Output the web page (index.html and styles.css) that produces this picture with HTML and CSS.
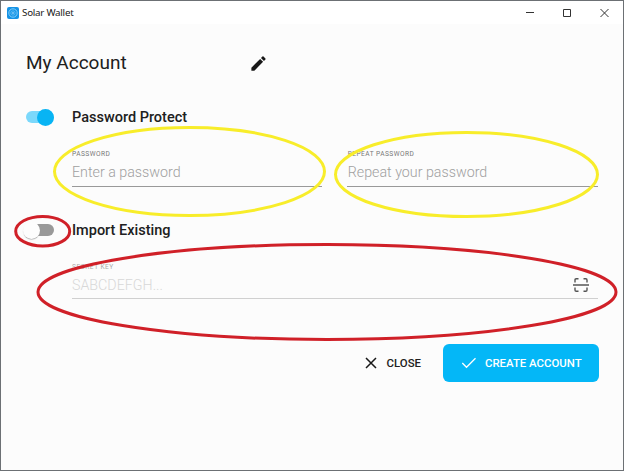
FILE: index.html
```html
<!DOCTYPE html>
<html lang="en">
<head>
<meta charset="utf-8">
<title>Solar Wallet</title>
<link rel="stylesheet" href="styles.css">
</head>
<body>
<div class="window">
  <header class="titlebar">
    <svg class="app-icon" viewBox="0 0 12 12"><rect width="12" height="12" rx="2" fill="#1593e6"/><circle cx="6" cy="6" r="4.2" fill="none" stroke="#8ad4fa" stroke-width=".9"/><circle cx="6" cy="6" r="2.2" fill="none" stroke="#62c0f5" stroke-width=".8"/><circle cx="6" cy="6" r=".8" fill="#d8f2ff"/></svg>
    <span class="app-name">Solar Wallet</span>
    <svg class="controls" viewBox="0 0 84 12" fill="none" stroke="#333"><path d="M2 5.500h8M39.500 2.500h7v7h-7zM76.500 2l8 8M84.500 2l-8 8" /></svg>
  </header>
  <main class="content">
    <div class="account">
      <h1 class="account-name">My Account</h1>
      <svg class="pencil" viewBox="0 0 24 24"><path d="M3 17.250V21h3.750L17.810 9.940l-3.750-3.750L3 17.250zM20.710 7.040a1 1 0 0 0 0-1.410l-2.340-2.340a1 1 0 0 0-1.410 0l-1.830 1.830 3.750 3.750 1.830-1.830z"/></svg>
    </div>
    <section class="option">
      <span class="switch on"><span class="thumb"></span></span>
      <h2 class="option-title">Password Protect</h2>
    </section>
    <div class="fields">
      <div class="field">
        <span class="label">PASSWORD</span>
        <span class="value">Enter a password</span>
      </div>
      <div class="field">
        <span class="label">REPEAT PASSWORD</span>
        <span class="value">Repeat your password</span>
      </div>
    </div>
    <section class="option import">
      <span class="switch"><span class="thumb"></span></span>
      <h2 class="option-title">Import Existing</h2>
    </section>
    <div class="fields">
      <div class="field disabled">
        <span class="label">SECRET KEY</span>
        <span class="value">SABCDEFGH...<svg class="scan" viewBox="0 0 16 14" fill="none" stroke="#555" stroke-width="1.400"><path d="M2 4.500V1.900q0-1.200 1.200-1.200H5.500M10.500.7h2.300q1.200 0 1.200 1.200v2.600M2 9.500v2.600q0 1.200 1.200 1.200h2.300M10.500 13.300h2.300q1.200 0 1.200-1.200V9.500M0 7h16"/></svg></span>
      </div>
    </div>
    <div class="actions">
      <button class="close"><svg class="x-icon" viewBox="0 0 12 12" fill="none" stroke="#181818" stroke-width="1.500"><path d="M1 1l10 10M11 1L1 11"/></svg><span>CLOSE</span></button>
      <button class="create"><svg class="check" viewBox="0 0 16 12" fill="none" stroke="#fff" stroke-width="1.300"><path d="M1.300 6l4.200 4.300L14.500 1.300"/></svg><span>CREATE ACCOUNT</span></button>
    </div>
  </main>
  <svg class="marks" viewBox="0 0 624 471" fill="none">
    <g stroke="#f8ed2a" stroke-width="3">
      <ellipse cx="189.500" cy="171.500" rx="135" ry="44"/>
      <ellipse cx="466.500" cy="174.500" rx="131" ry="42"/>
    </g>
    <g stroke="#d02028" stroke-width="3">
      <ellipse cx="42.700" cy="231.200" rx="27" ry="14.800"/>
      <ellipse cx="327" cy="292" rx="289" ry="47.500"/>
    </g>
  </svg>
</div>
</body>
</html>
```
FILE: styles.css
```css
* { box-sizing: border-box; }
body { margin: 0; font-family: Roboto, sans-serif; color: #202020; }
h1, h2 { margin: 0; }
svg { display: block; }
.window { position: relative; width: 624px; height: 471px; border: 1px solid #6c7074; background: #fcfcfc; overflow: hidden; }
.titlebar { display: flex; align-items: center; height: 23px; padding: 0 15px 0 6px; background: #fff; }
.app-icon { width: 12px; height: 12px; }
.app-name { margin-left: 3px; font: 9.800px/22px "Noto Sans", sans-serif; letter-spacing: -.25px; }
.controls { width: 84px; height: 12px; margin-left: auto; overflow: visible; }
.content { padding: 0 24px 0 25px; }
.account { display: flex; align-items: center; justify-content: space-between; width: 242px; height: 30px; margin-top: 24px; }
.account-name { font-size: 19px; font-weight: 400; line-height: 30px; white-space: nowrap; }
.pencil { width: 19px; height: 19px; fill: #181818; }
.option { display: flex; align-items: center; height: 24px; margin-top: 27px; }
.switch { display: flex; align-items: center; width: 28px; height: 12px; border-radius: 6px; background: #999; }
.thumb { width: 17px; height: 17px; flex: none; margin-left: -3px; border-radius: 50%; background: #fdfdfd; box-shadow: 0 1px 1px -.5px #999; }
.on { justify-content: flex-end; background: #7bd8fb; }
.on .thumb { background: #08b4f4; box-shadow: none; }
.option-title { margin-left: 18px; padding-top: 1px; font-size: 14.500px; font-weight: 500; line-height: 25px; white-space: nowrap; }
.fields { display: flex; gap: 25px; padding: 0 1px 0 46px; }
.field { flex: 1; height: 58px; padding-top: 21px; border-bottom: 1px solid #999; }
.field + .field { padding-left: .5px; }
.label { display: block; font-size: 6.600px; line-height: 9px; color: #777; letter-spacing: .46px; }
.value { display: flex; justify-content: space-between; align-items: center; height: 26px; font-size: 14.250px; font-weight: 300; color: #a0a0a0; }
.import { margin-top: 31px; }
.disabled { height: 57px; border-color: #d0d0d0; }
.disabled .label { color: #aaa; }
.disabled .value { color: #d8d8d8; }
.scan { width: 16px; height: 14px; margin-right: 9px; }
.actions { display: flex; justify-content: flex-end; align-items: center; margin-top: 44.500px; }
button { display: flex; align-items: center; border: 0; padding: 0; background: none; font: 500 11.400px Roboto, sans-serif; color: #202020; white-space: nowrap; }
.x-icon { width: 12px; height: 12px; margin-right: 10px; }
.close { margin-right: 22px; }
.create { width: 156px; height: 38px; padding-left: 18px; border-radius: 6px; background: #04b7f7; color: #fff; }
.check { width: 16px; height: 12px; margin-right: 8px; }
.marks { position: absolute; left: -1px; top: -1px; width: 624px; height: 471px; pointer-events: none; }
```
